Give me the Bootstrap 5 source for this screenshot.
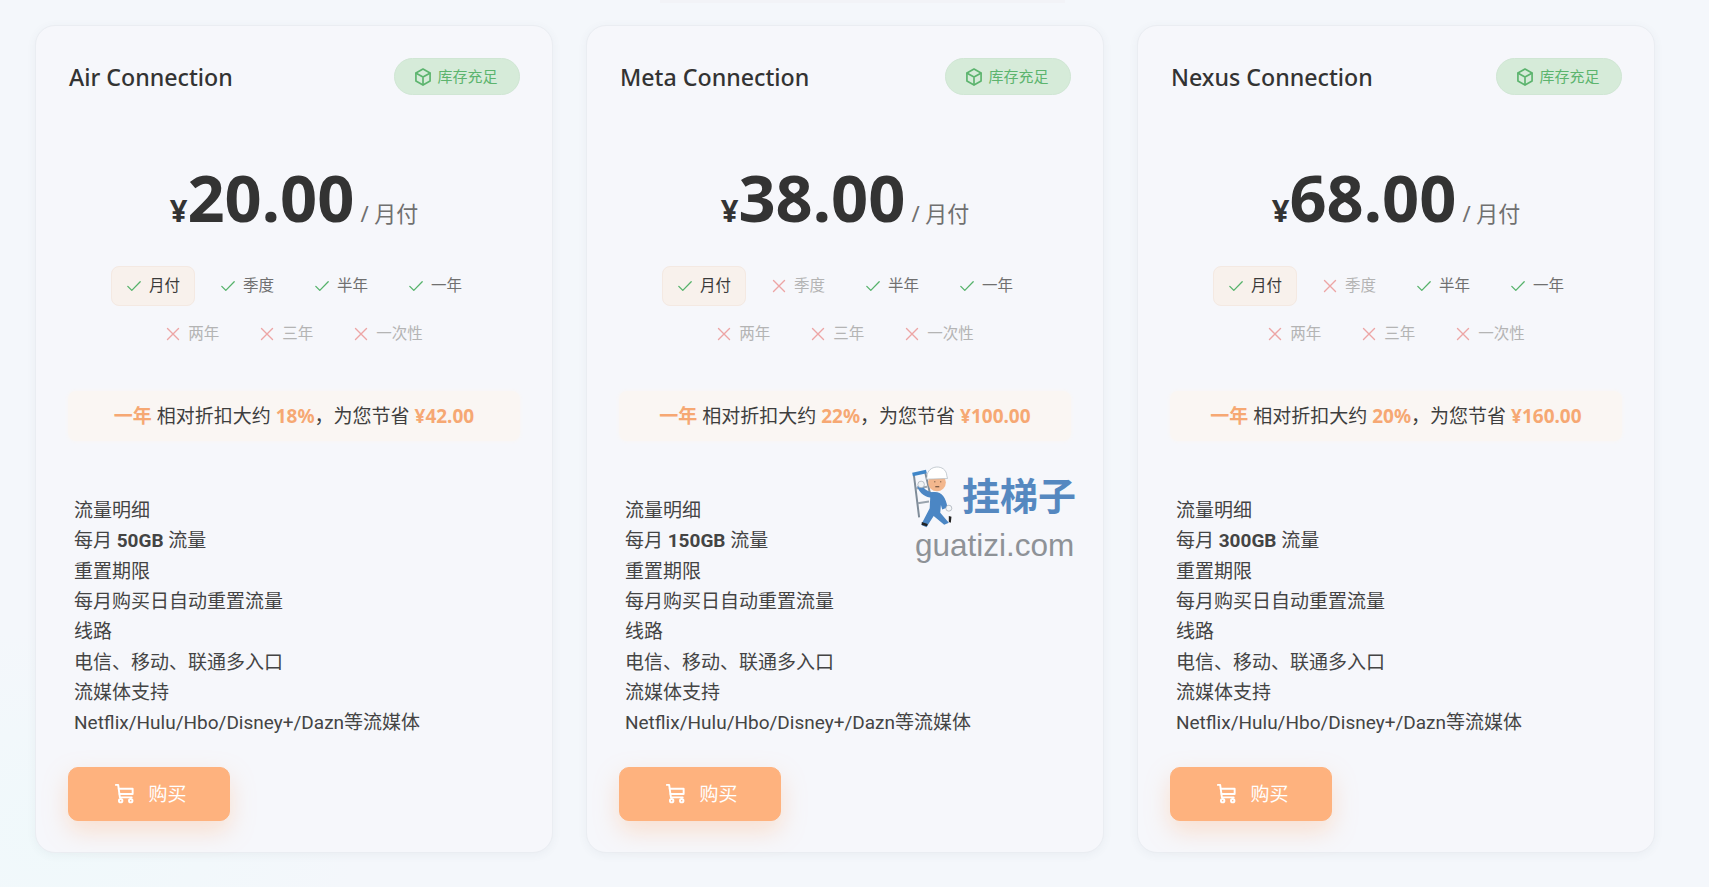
<!DOCTYPE html>
<html lang="zh-CN">
<head>
    <meta charset="UTF-8">
    <meta name="viewport" content="width=device-width, initial-scale=1.0">
    <title>购买订阅</title>
    <link href="https://cdn.jsdelivr.net/npm/bootstrap@5.3.2/dist/css/bootstrap.min.css" rel="stylesheet">
    <style>
        html, body { height: 887px; overflow: hidden; }
        body {
            background-color: #f4f7fb;
            background-image: radial-gradient(ellipse 300px 200px at 60px 830px, #f0f9fb, transparent);
            color: #3a3a3a;
            font-family: "Noto Sans", "Noto Sans CJK SC", sans-serif;
        }
        .top-edge { position: absolute; left: 660px; top: 0; width: 405px; height: 3px; background: #f2f3f7; }
        .plans-wrap { padding: 25px 54px 0 35px; }
        .plans-row { --bs-gutter-x: 33px; --bs-gutter-y: 0; }
        .plan-card {
            height: 828px;
            padding: 32px;
            background: #f6f7fb;
            border: 1px solid #eaedf2;
            border-radius: 20px;
            box-shadow: 0 2px 10px rgba(60, 80, 110, .06);
        }
        .plan-head { height: 40px; }
        .plan-name { font-size: 23.2px; line-height: 38px; font-weight: 500; color: #333; margin: 0; padding-left: 1px; }
        .stock-pill {
            width: 126px;
            height: 37px;
            padding-right: 3px;
            background: #d6ebd9;
            border: 1px solid #d0e6d4;
            border-radius: 19px;
            color: #5cb46e;
            font-size: 15px;
        }
        .stock-pill svg { width: 20px; height: 20px; }
        .price-line { margin-top: 67px; height: 82px; color: #333; }
        .price-sign { font-size: 31px; font-weight: 700; }
        .price-num { font-size: 65px; font-weight: 700; line-height: 1; }
        .price-unit { font-size: 22px; color: #707070; margin-left: 6px; }
        .period-list { margin-top: 19px; column-gap: 10px; row-gap: 8px; width: 400px; }
        .period-item {
            height: 40px;
            padding: 0 14px;
            gap: 7px;
            border: 1px solid transparent;
            border-radius: 8px;
            font-size: 15.5px;
            color: #707070;
        }
        .period-item svg { width: 16px; height: 16px; flex: none; }
        .period-item.is-active { background: #f8f1ec; border-color: #f4e9e2; color: #3a3a3a; }
        .period-item.is-off { color: #b4b4b4; }
        .save-note {
            margin-top: 37px;
            height: 50px;
            background: #faf6f3;
            border-radius: 8px;
            box-shadow: 0 0 4px #faf6f3;
            font-size: 19px;
            color: #3e3e3e;
        }
        .save-note b { color: #f6a873; font-weight: 700; }
        .feature-list { margin: 55px 0 0; padding: 0 0 0 6px; list-style: none; font-family: Roboto, "Noto Sans CJK SC", sans-serif; font-size: 19px; line-height: 30.35px; color: #444; }
        .buy-btn {
            --bs-btn-color: #fff;
            --bs-btn-bg: #feb27e;
            --bs-btn-border-color: #feb27e;
            --bs-btn-hover-color: #fff;
            --bs-btn-hover-bg: #f9a56c;
            --bs-btn-hover-border-color: #f9a56c;
            width: 162px;
            height: 54px;
            margin-top: 28px;
            padding-left: 14px;
            gap: 12px;
            border-radius: 10px;
            font-size: 19px;
            box-shadow: 0 10px 24px rgba(254, 178, 126, .35);
        }
        .buy-btn svg { width: 23px; height: 23px; }
        .guatizi-mark { position: absolute; left: 319px; top: 436px; width: 172px; pointer-events: none; }
        .guatizi-mark svg { width: 52px; height: 66px; flex: none; }
        .guatizi-cn { font-size: 38px; font-weight: 700; color: #5588c0; line-height: 1; }
        .guatizi-url { font-family: "Liberation Sans", sans-serif; font-size: 31.5px; color: #8e9297; line-height: 1; margin-top: 2px; margin-left: 9px; }
    </style>
</head>
<body>
    <div class="top-edge"></div>
    <svg width="0" height="0" class="position-absolute">
        <symbol id="ico-box" viewBox="0 0 24 24" fill="none" stroke="currentColor" stroke-width="2" stroke-linejoin="round" stroke-linecap="round">
            <path d="M12 2.5l8.5 4.8v9.4L12 21.5l-8.5-4.8V7.3z"/><path d="M3.8 7.4L12 12l8.2-4.6M12 12v9.3"/>
        </symbol>
        <symbol id="ico-ok" viewBox="0 0 16 16" fill="none" stroke="#55b26a" stroke-width="1.3" stroke-linecap="round" stroke-linejoin="round">
            <path d="M1.8 8.4l4 4 8.4-8.6"/>
        </symbol>
        <symbol id="ico-no" viewBox="0 0 16 16" fill="none" stroke="#eda5a5" stroke-width="1.4" stroke-linecap="round">
            <path d="M2.5 2.5l11 11M13.5 2.5l-11 11"/>
        </symbol>
        <symbol id="ico-cart" viewBox="0 0 24 24" fill="none" stroke="currentColor" stroke-width="2" stroke-linecap="round" stroke-linejoin="round">
            <path d="M3 3h2.4l1.8 13h12.3"/><path d="M6 7h14.5v5.5H6.8"/><circle cx="8" cy="19.5" r="1.8"/><circle cx="18.5" cy="19.5" r="1.8"/>
        </symbol>
    </svg>

    <div class="plans-wrap">
        <div class="row plans-row">
            <div class="col-4">
                <div class="plan-card">
                    <div class="plan-head d-flex justify-content-between align-items-start">
                        <h5 class="plan-name">Air Connection</h5>
                        <span class="stock-pill d-inline-flex justify-content-center align-items-center gap-1"><svg><use href="#ico-box"/></svg>库存充足</span>
                    </div>
                    <div class="price-line d-flex justify-content-center align-items-baseline">
                        <span class="price-sign">¥</span><span class="price-num">20.00</span><span class="price-unit">/ 月付</span>
                    </div>
                    <div class="period-list d-flex flex-wrap justify-content-center mx-auto">
                        <span class="period-item is-active d-inline-flex align-items-center"><svg><use href="#ico-ok"/></svg>月付</span>
                        <span class="period-item d-inline-flex align-items-center"><svg><use href="#ico-ok"/></svg>季度</span>
                        <span class="period-item d-inline-flex align-items-center"><svg><use href="#ico-ok"/></svg>半年</span>
                        <span class="period-item d-inline-flex align-items-center"><svg><use href="#ico-ok"/></svg>一年</span>
                        <span class="period-item is-off d-inline-flex align-items-center"><svg><use href="#ico-no"/></svg>两年</span>
                        <span class="period-item is-off d-inline-flex align-items-center"><svg><use href="#ico-no"/></svg>三年</span>
                        <span class="period-item is-off d-inline-flex align-items-center"><svg><use href="#ico-no"/></svg>一次性</span>
                    </div>
                    <div class="save-note d-flex justify-content-center align-items-center">
                        <span><b>一年</b> 相对折扣大约 <b>18%</b>，为您节省 <b>¥42.00</b></span>
                    </div>
                    <ul class="feature-list">
                        <li>流量明细</li>
                        <li>每月 <strong>50GB</strong> 流量</li>
                        <li>重置期限</li>
                        <li>每月购买日自动重置流量</li>
                        <li>线路</li>
                        <li>电信、移动、联通多入口</li>
                        <li>流媒体支持</li>
                        <li>Netflix/Hulu/Hbo/Disney+/Dazn等流媒体</li>
                    </ul>
                    <button type="button" class="btn buy-btn d-flex justify-content-center align-items-center"><svg><use href="#ico-cart"/></svg>购买</button>
                </div>
            </div>
            <div class="col-4">
                <div class="plan-card position-relative">
                    <div class="plan-head d-flex justify-content-between align-items-start">
                        <h5 class="plan-name">Meta Connection</h5>
                        <span class="stock-pill d-inline-flex justify-content-center align-items-center gap-1"><svg><use href="#ico-box"/></svg>库存充足</span>
                    </div>
                    <div class="price-line d-flex justify-content-center align-items-baseline">
                        <span class="price-sign">¥</span><span class="price-num">38.00</span><span class="price-unit">/ 月付</span>
                    </div>
                    <div class="period-list d-flex flex-wrap justify-content-center mx-auto">
                        <span class="period-item is-active d-inline-flex align-items-center"><svg><use href="#ico-ok"/></svg>月付</span>
                        <span class="period-item is-off d-inline-flex align-items-center"><svg><use href="#ico-no"/></svg>季度</span>
                        <span class="period-item d-inline-flex align-items-center"><svg><use href="#ico-ok"/></svg>半年</span>
                        <span class="period-item d-inline-flex align-items-center"><svg><use href="#ico-ok"/></svg>一年</span>
                        <span class="period-item is-off d-inline-flex align-items-center"><svg><use href="#ico-no"/></svg>两年</span>
                        <span class="period-item is-off d-inline-flex align-items-center"><svg><use href="#ico-no"/></svg>三年</span>
                        <span class="period-item is-off d-inline-flex align-items-center"><svg><use href="#ico-no"/></svg>一次性</span>
                    </div>
                    <div class="save-note d-flex justify-content-center align-items-center">
                        <span><b>一年</b> 相对折扣大约 <b>22%</b>，为您节省 <b>¥100.00</b></span>
                    </div>
                    <ul class="feature-list">
                        <li>流量明细</li>
                        <li>每月 <strong>150GB</strong> 流量</li>
                        <li>重置期限</li>
                        <li>每月购买日自动重置流量</li>
                        <li>线路</li>
                        <li>电信、移动、联通多入口</li>
                        <li>流媒体支持</li>
                        <li>Netflix/Hulu/Hbo/Disney+/Dazn等流媒体</li>
                    </ul>
                    <button type="button" class="btn buy-btn d-flex justify-content-center align-items-center"><svg><use href="#ico-cart"/></svg>购买</button>
                    <!-- watermark -->
                    <div class="guatizi-mark">
                        <div class="d-flex align-items-center gap-1">
                            <svg viewBox="50 40 150 200">
                                <path d="M70 78l16 130M104 70l16 70" stroke="#7f8c99" stroke-width="6" fill="none"/>
                                <path d="M66 78l42-9" stroke="#3f86c8" stroke-width="11" fill="none"/>
                                <path d="M76 120l34-5M82 165l34-5" stroke="#9aa4ae" stroke-width="6" fill="none"/>
                                <path d="M125 132c25-6 42 12 47 46l-16 6-4-14-2 24 26 30-14 6-32-26-22 34-16-8 26-50 2-40z" fill="#4b86c4"/>
                                <path d="M92 108c6 10 18 22 36 24l-2 16c-20 0-38-12-46-34z" fill="#4b86c4"/>
                                <circle cx="92" cy="108" r="10" fill="#f1f3f5" stroke="#9aa4ae" stroke-width="2"/>
                                <circle cx="176" cy="180" r="9" fill="#f6f7f8" stroke="#9aa4ae" stroke-width="2"/>
                                <ellipse cx="140" cy="102" rx="27" ry="27" fill="#f3b78d"/>
                                <path d="M110 84c0-36 58-40 60-2l2 8-64 2z" fill="#fff" stroke="#aab2ba" stroke-width="2"/>
                                <path d="M132 100h3M150 100h3M135 115h12" stroke="#5a4030" stroke-width="3" fill="none"/>
                                <path d="M94 222l18 6-2 7-16-4zM176 204l8 2-2 18-6-2z" fill="#222"/>
                            </svg>
                            <span class="guatizi-cn">挂梯子</span>
                        </div>
                        <div class="guatizi-url">guatizi.com</div>
                    </div>
                </div>
            </div>
            <div class="col-4">
                <div class="plan-card">
                    <div class="plan-head d-flex justify-content-between align-items-start">
                        <h5 class="plan-name">Nexus Connection</h5>
                        <span class="stock-pill d-inline-flex justify-content-center align-items-center gap-1"><svg><use href="#ico-box"/></svg>库存充足</span>
                    </div>
                    <div class="price-line d-flex justify-content-center align-items-baseline">
                        <span class="price-sign">¥</span><span class="price-num">68.00</span><span class="price-unit">/ 月付</span>
                    </div>
                    <div class="period-list d-flex flex-wrap justify-content-center mx-auto">
                        <span class="period-item is-active d-inline-flex align-items-center"><svg><use href="#ico-ok"/></svg>月付</span>
                        <span class="period-item is-off d-inline-flex align-items-center"><svg><use href="#ico-no"/></svg>季度</span>
                        <span class="period-item d-inline-flex align-items-center"><svg><use href="#ico-ok"/></svg>半年</span>
                        <span class="period-item d-inline-flex align-items-center"><svg><use href="#ico-ok"/></svg>一年</span>
                        <span class="period-item is-off d-inline-flex align-items-center"><svg><use href="#ico-no"/></svg>两年</span>
                        <span class="period-item is-off d-inline-flex align-items-center"><svg><use href="#ico-no"/></svg>三年</span>
                        <span class="period-item is-off d-inline-flex align-items-center"><svg><use href="#ico-no"/></svg>一次性</span>
                    </div>
                    <div class="save-note d-flex justify-content-center align-items-center">
                        <span><b>一年</b> 相对折扣大约 <b>20%</b>，为您节省 <b>¥160.00</b></span>
                    </div>
                    <ul class="feature-list">
                        <li>流量明细</li>
                        <li>每月 <strong>300GB</strong> 流量</li>
                        <li>重置期限</li>
                        <li>每月购买日自动重置流量</li>
                        <li>线路</li>
                        <li>电信、移动、联通多入口</li>
                        <li>流媒体支持</li>
                        <li>Netflix/Hulu/Hbo/Disney+/Dazn等流媒体</li>
                    </ul>
                    <button type="button" class="btn buy-btn d-flex justify-content-center align-items-center"><svg><use href="#ico-cart"/></svg>购买</button>
                </div>
            </div>
        </div>
    </div>

    <script src="https://cdn.jsdelivr.net/npm/bootstrap@5.3.2/dist/js/bootstrap.bundle.min.js"></script>
</body>
</html>
